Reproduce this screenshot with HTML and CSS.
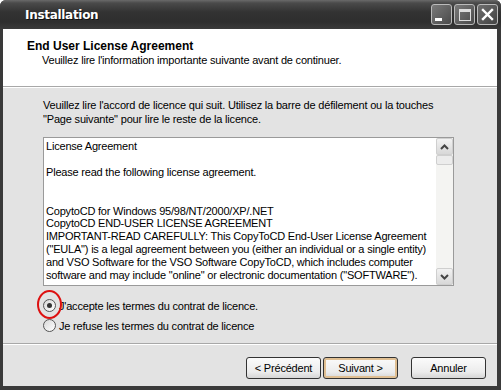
FILE: index.html
```html
<!DOCTYPE html>
<html lang="fr">
<head>
  <meta charset="UTF-8">
  <title>Installation</title>
  <link rel="stylesheet" href="styles.css">
</head>
<body>
  <div class="window">
    <div class="titlebar">
      <span class="title">Installation</span>
      <div class="caption-buttons">
        <span class="cap-btn"><span class="min-glyph"></span></span>
        <span class="cap-btn"><span class="max-glyph"></span></span>
        <span class="cap-btn close">
          <svg width="13" height="13" viewBox="0 0 13 13"><path d="M2 2 L11 11 M11 2 L2 11" stroke="#fff" stroke-width="2.4" stroke-linecap="square"/></svg>
        </span>
      </div>
    </div>
    <div class="content">
      <div class="header">
        <div class="header-title">End User License Agreement</div>
        <div class="header-sub">Veuillez lire l'information importante suivante avant de continuer.</div>
      </div>
      <div class="main">
        <p class="intro">Veuillez lire l'accord de licence qui suit. Utilisez la barre de défilement ou la touches<br>"Page suivante" pour lire le reste de la licence.</p>
        <div class="memo">
          <div class="memo-text">License Agreement<br><br>Please read the following license agreement.<br><br><br>CopytoCD for Windows 95/98/NT/2000/XP/.NET<br>CopytoCD END-USER LICENSE AGREEMENT<br>IMPORTANT-READ CAREFULLY: This CopyToCD End-User License Agreement<br>("EULA") is a legal agreement between you (either an individual or a single entity)<br>and VSO Software for the VSO Software CopyToCD, which includes computer<br>software and may include "online" or electronic documentation ("SOFTWARE").</div>
          <div class="scrollbar">
            <span class="sb-btn"><svg width="9" height="6" viewBox="0 0 9 6"><path d="M1 5 L4.5 1.5 L8 5" fill="none" stroke="#444" stroke-width="2"/></svg></span>
            <span class="sb-thumb"></span>
            <span class="sb-track"></span>
            <span class="sb-btn"><svg width="9" height="6" viewBox="0 0 9 6"><path d="M1 1 L4.5 4.5 L8 1" fill="none" stroke="#444" stroke-width="2"/></svg></span>
          </div>
        </div>
        <div class="choices">
          <label class="choice"><span class="radio checked"></span>J'accepte les termes du contrat de licence.</label>
          <label class="choice"><span class="radio"></span>Je refuse les termes du contrat de licence</label>
          <span class="mark"></span>
        </div>
      </div>
      <div class="footer">
        <button class="btn">&lt; Précédent</button>
        <button class="btn default">Suivant &gt;</button>
        <button class="btn cancel">Annuler</button>
      </div>
    </div>
  </div>
</body>
</html>
```

FILE: styles.css
```css
body {
    margin: 0;
    background: #fff;
    font-family: "Liberation Sans", Arial, sans-serif;
    font-size: 11px;
    color: #000;
}

.window {
    width: 501px;
    height: 390px;
    box-sizing: border-box;
    display: flex;
    flex-direction: column;
    background: #3a3a3a;
    padding: 0 4px 4px 3px;
    border-radius: 6px 6px 0 0;
}

/* barre de titre */
.titlebar {
    height: 29px;
    display: flex;
    align-items: center;
    justify-content: space-between;
    margin: 0 -4px 0 -3px;
    padding: 0 3px 0 25px;
    border-radius: 6px 6px 0 0;
    background: linear-gradient(#6a6a6a 0, #4a4a4a 3px, #333 12px, #2e2e2e 22px, #3a3a3a 29px);
}

.title {
    color: #fff;
    font-family: "DejaVu Sans", sans-serif;
    font-weight: bold;
    font-size: 12px;
    letter-spacing: -0.3px;
    text-shadow: 1px 1px 0 #111;
}

.caption-buttons {
    display: flex;
    gap: 2px;
}

.cap-btn {
    width: 21px;
    height: 21px;
    box-sizing: border-box;
    border: 1px solid #bbb;
    border-radius: 3px;
    background: linear-gradient(135deg, #7a7a7a, #4a4a4a);
    display: flex;
    align-items: center;
    justify-content: center;
}

.cap-btn.close {
    background: linear-gradient(135deg, #6e6e6e, #444);
}

.min-glyph {
    width: 7px;
    height: 3px;
    background: #fff;
    margin: 10px 6px 0 0;
}

.max-glyph {
    width: 10px;
    height: 8px;
    border: 1px solid #ddd;
    border-top-width: 3px;
}

.content {
    flex: 1;
    display: flex;
    flex-direction: column;
    background: #e3e3e3;
}

/* entête blanc */
.header {
    height: 58px;
    box-sizing: border-box;
    background: #fff;
    padding: 10px 0 0 24px;
    border-bottom: 1px solid #a8a8a8;
    box-shadow: 0 1px 0 #fff;
}

.header-title {
    font-weight: bold;
    font-size: 12px;
    line-height: 14px;
}

.header-sub {
    padding-left: 15px;
    line-height: 15px;
    letter-spacing: -0.2px;
}

.main {
    position: relative;
    padding: 11px 0 0 40px;
    flex: 1;
}

.intro {
    margin: 0;
    line-height: 14px;
    letter-spacing: -0.18px;
}

.memo {
    display: flex;
    width: 411px;
    height: 149px;
    box-sizing: border-box;
    margin-top: 11px;
    border: 1px solid #9a9a9a;
    background: #fff;
}

.memo-text {
    flex: 1;
    padding: 2px 0 0 2px;
    line-height: 12.9px;
    letter-spacing: -0.2px;
    white-space: nowrap;
    overflow: hidden;
}

.scrollbar {
    width: 17px;
    display: flex;
    flex-direction: column;
    background: #f4f4f2;
}

.sb-btn {
    height: 17px;
    box-sizing: border-box;
    border: 1px solid #cfcfcf;
    border-radius: 2px;
    background: linear-gradient(#f2f2f2, #d8d8d8);
    display: flex;
    align-items: center;
    justify-content: center;
}

.sb-thumb {
    height: 8px;
    border: 1px solid #cfcfcf;
    border-radius: 2px;
    background: #ececec;
}

.sb-track {
    flex: 1;
}

.choices {
    position: relative;
    margin-top: 13px;
    display: flex;
    flex-direction: column;
    gap: 7px;
}

.choice {
    display: flex;
    align-items: center;
    gap: 3px;
    height: 13px;
    letter-spacing: -0.2px;
}

.radio {
    width: 13px;
    height: 13px;
    box-sizing: border-box;
    border: 1px solid #555;
    border-radius: 50%;
    background: linear-gradient(135deg, #d8d8d8, #fff);
    display: flex;
    align-items: center;
    justify-content: center;
}

.radio.checked::after {
    content: "";
    width: 5px;
    height: 5px;
    border-radius: 50%;
    background: #333;
}

/* annotation rouge */
.mark {
    position: absolute;
    left: -6px;
    top: -9px;
    width: 25px;
    height: 29px;
    box-sizing: border-box;
    border: 2px solid #d11;
    border-radius: 50%;
}

.footer {
    height: 43px;
    box-sizing: border-box;
    border-top: 1px solid #a8a8a8;
    box-shadow: inset 0 1px 0 #fff;
    display: flex;
    justify-content: flex-end;
    align-items: flex-start;
    padding: 13px 11px 0 0;
}

.btn {
    width: 75px;
    height: 22px;
    box-sizing: border-box;
    margin-left: 2px;
    border: 1px solid #333;
    border-radius: 3px;
    background: linear-gradient(#fbfbfb, #ececec 70%, #d6d6d6);
    font-family: "Liberation Sans", Arial, sans-serif;
    font-size: 11px;
    letter-spacing: -0.2px;
    padding: 0;
}

.btn.default {
    box-shadow: inset 0 0 0 2px #e0bf92;
}

.btn.cancel {
    margin-left: 13px;
}
```
